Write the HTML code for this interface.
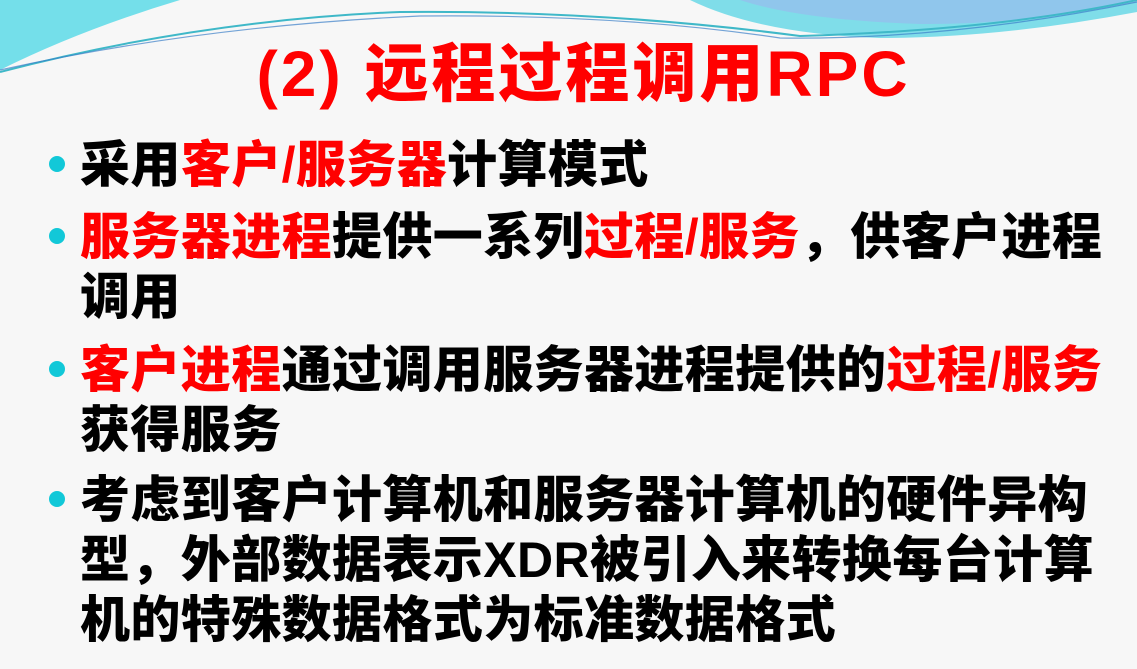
<!DOCTYPE html>
<html><head><meta charset="utf-8"><style>
body{margin:0;width:1137px;height:669px;background:#f7f7f7;position:relative;overflow:hidden;font-family:"Liberation Sans","Noto Sans CJK SC",sans-serif;}
svg{position:absolute;left:0;top:0}
.t{position:absolute;left:15px;width:1137px;top:34px;text-align:center;color:#ff0000;font-weight:900;font-size:64px;line-height:80px;letter-spacing:3px}
.b{position:absolute;left:80px;font-weight:900;font-size:50px;line-height:60px;color:#000;white-space:nowrap;letter-spacing:0.4px}
.r{color:#ff0000}
.d{position:absolute;left:49px;width:16px;height:16px;border-radius:50%;background:#12c8d8}
</style></head><body>
<svg width="1137" height="120">
<path d="M0 0 L180 0 Q80 30 0 70 Z" fill="#74dfea"/>
<path d="M690 0 L1137 0 L1137 12 Q1000 38 880 38 Q760 34 690 0Z" fill="#7fdde9"/>
<path d="M740 0 L1137 0 L1137 2 Q1020 25 920 24 Q800 20 740 0Z" fill="#90c6ec"/>
<path d="M0 72 Q200 20 400 12 Q600 10 800 36 Q1000 30 1137 0" stroke="#3fb8c8" stroke-width="2" fill="none"/>
<path d="M0 70 Q200 26 420 16 Q620 14 780 38 Q950 40 1137 2" stroke="#3a7fc8" stroke-width="1.2" fill="none" opacity="0.7"/>
</svg>
<div class="t">(2) 远程过程调用RPC</div>
<div class="d" style="top:156px"></div>
<div class="b" style="top:135px">采用<span class="r">客户/服务器</span>计算模式</div>
<div class="d" style="top:228px"></div>
<div class="b" style="top:207px"><span class="r">服务器进程</span>提供一系列<span class="r">过程/服务</span>，供客户进程<br>调用</div>
<div class="d" style="top:361px"></div>
<div class="b" style="top:340px"><span class="r">客户进程</span>通过调用服务器进程提供的<span class="r">过程/服务</span><br>获得服务</div>
<div class="d" style="top:491px"></div>
<div class="b" style="top:470px">考虑到客户计算机和服务器计算机的硬件异构<br>型，外部数据表示XDR被引入来转换每台计算<br>机的特殊数据格式为标准数据格式</div>
</body></html>
